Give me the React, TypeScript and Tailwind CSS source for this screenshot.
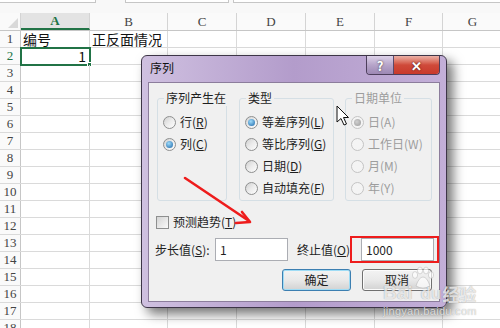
import React from 'react';

const cols = [
  { l: 'A', w: 69 },
  { l: 'B', w: 78 },
  { l: 'C', w: 69 },
  { l: 'D', w: 69 },
  { l: 'E', w: 69 },
  { l: 'F', w: 68 },
  { l: 'G', w: 60 },
];

const rows = Array.from({ length: 18 }, (_, i) => i + 1);

const Radio: React.FC<{ checked?: boolean; disabled?: boolean }> = ({ checked, disabled }) => (
  <span
    className={`flex h-[13px] w-[13px] shrink-0 items-center justify-center rounded-full border ${
      disabled
        ? 'border-[#c4c4c4] bg-[#f4f4f4]'
        : 'border-[#8e8f8f] bg-gradient-to-br from-[#d0d0d0] via-[#ececec] to-[#fdfdfd]'
    }`}
  >
    {checked && (
      <span
        className={`h-[7px] w-[7px] rounded-full ${
          disabled
            ? 'bg-[radial-gradient(circle_at_40%_40%,#d0d0d0,#9a9a9a)]'
            : 'bg-[radial-gradient(circle_at_40%_35%,#9fdcfb,#1a64a6)]'
        }`}
      />
    )}
  </span>
);

const Option: React.FC<{ label: string; k: string; checked?: boolean; disabled?: boolean; under?: boolean }> = ({
  label,
  k,
  checked,
  disabled,
  under = true,
}) => (
  <div className={`flex h-[22px] items-center gap-[4px] whitespace-nowrap ${disabled ? 'text-[#9d9d9d]' : 'text-[#1e1e1e]'}`}>
    <Radio checked={checked} disabled={disabled} />
    <span>
      {label}({under ? <u>{k}</u> : k})
    </span>
  </div>
);

const Group: React.FC<{ title: string; className: string; children: React.ReactNode; disabled?: boolean }> = ({
  title,
  className,
  children,
  disabled,
}) => (
  <fieldset className={`h-[111px] min-w-0 rounded-[3px] border border-[#d5dfe5] pl-[5px] pt-[5px] ${className}`}>
    <legend
      className={`ml-[1px] whitespace-nowrap px-[2px] leading-[16px] ${disabled ? 'text-[#9d9d9d]' : 'text-[#1e1e1e]'}`}
    >
      {title}
    </legend>
    {children}
  </fieldset>
);

const Button: React.FC<{ children: React.ReactNode; primary?: boolean; className?: string }> = ({ children, primary, className }) => (
  <div
    className={`flex h-[22px] items-center justify-center rounded-[3px] border bg-gradient-to-b from-[#f3f3f3] via-[#e9e9e9] to-[#d2d2d2] text-[#1e1e1e] ${
      primary ? 'border-[#3c7fb1] shadow-[inset_0_0_0_1px_#9fdcf5]' : 'border-[#707070] shadow-[inset_0_0_0_1px_#fbfbfb]'
    } ${className ?? ''}`}
  >
    {children}
  </div>
);

const Dialog: React.FC = () => (
  <div className="absolute left-[141px] top-[55px] flex h-[253px] w-[306px] flex-col rounded-[6px] border border-[#3d3547] bg-gradient-to-r from-[#cfc0e0] via-[#b39ccb] to-[#c3afd8] shadow-[6px_6px_12px_rgba(0,0,0,0.55)] font-['Noto_Sans_CJK_SC',sans-serif] text-[12px]">
    <div className="flex h-[26px] shrink-0 items-start justify-between">
      <span className="ml-[8px] mt-[4px] text-[12px] leading-[16px] text-[#111]">序列</span>
      <div className="mr-[6px] flex overflow-hidden rounded-b-[4px] border border-t-0 border-[#4d3f5c]">
        <div className="flex h-[18px] w-[27px] items-center justify-center border-r border-[#5b4a6b] bg-gradient-to-b from-[#ddd2e8] via-[#b6a4c9] to-[#9d88b4] text-[13px] font-bold leading-none text-white [text-shadow:0_0_2px_#333]">
          ?
        </div>
        <div className="flex h-[18px] w-[45px] items-center justify-center bg-gradient-to-b from-[#eab0a6] via-[#cf4a3a] to-[#c8392b] text-[13px] font-bold leading-none text-white [text-shadow:0_0_2px_#3a0d08]">
          ✕
        </div>
      </div>
    </div>
    <div className="mx-[6px] mb-[5px] flex flex-1 flex-col border border-[#8c7d9c] bg-[#f0f0f0]">
      <div className="ml-[8px] mt-[7px] flex">
        <Group title="序列产生在" className="w-[70px]">
          <Option label="行" k="R" />
          <Option label="列" k="C" checked />
        </Group>
        <Group title="类型" className="ml-[12px] w-[95px]">
          <Option label="等差序列" k="L" checked />
          <Option label="等比序列" k="G" />
          <Option label="日期" k="D" />
          <Option label="自动填充" k="F" />
        </Group>
        <Group title="日期单位" className="ml-[11px] w-[87px]" disabled>
          <Option label="日" k="A" checked disabled under={false} />
          <Option label="工作日" k="W" disabled under={false} />
          <Option label="月" k="M" disabled under={false} />
          <Option label="年" k="Y" disabled under={false} />
        </Group>
      </div>
      <div className="ml-[7px] mt-[13px] flex h-[16px] items-center gap-[4px] text-[#1e1e1e]">
        <span className="h-[13px] w-[13px] border border-[#8e8f8f] bg-gradient-to-br from-[#d4d4d4] to-[#fafafa]" />
        <span>
          预测趋势(<u>T</u>)
        </span>
      </div>
      <div className="ml-[6px] mt-[8px] flex items-center text-[#1e1e1e]">
        <span className="w-[60px]">
          步长值(<u>S</u>):
        </span>
        <div className="flex h-[23px] w-[73px] items-center border border-[#abadb3] bg-white pl-[4px]">1</div>
        <span className="ml-[9px] w-[64px]">
          终止值(<u>O</u>)
        </span>
        <div className="relative flex h-[23px] w-[73px] items-center border border-[#abadb3] bg-white pl-[4px]">
          1000
          <div className="absolute -left-[12px] -top-[3px] h-[27px] w-[89px] border-2 border-[#ee1c1c]" />
        </div>
      </div>
      <div className="mr-[7px] mt-[8px] flex justify-end gap-[11px]">
        <Button primary className="w-[69px]">
          确定
        </Button>
        <Button className="w-[70px]">取消</Button>
      </div>
    </div>
  </div>
);

export default function App() {
  return (
    <div className="relative h-[328px] w-[500px] overflow-hidden bg-white font-['Noto_Sans_CJK_SC',sans-serif]">
      {/* formula bar remnant */}
      <div className="flex h-[13px] items-start bg-[#f8f8f8]">
        <div className="h-[3px] w-[96px] border-b border-r border-[#c6c6c6] bg-white" />
        <div className="ml-[29px] h-[3px] w-[104px] border-x border-b border-[#c6c6c6] bg-white" />
        <div className="ml-[4px] h-[3px] flex-1 border-b border-l border-[#c6c6c6] bg-white" />
      </div>
      {/* column headers */}
      <div className="flex h-[18px] border-b border-[#c6c6c6] bg-[#fafafa] font-['Liberation_Serif',serif] text-[13px] text-[#444]">
        <div className="relative w-[21px] shrink-0 border-r border-[#d4d4d4]">
          <svg className="absolute bottom-[2px] right-[2px]" width="10" height="10" viewBox="0 0 10 10">
            <path d="M10 0 L10 10 L0 10 Z" fill="#d9d9d9" />
          </svg>
        </div>
        {cols.map((c) => (
          <div
            key={c.l}
            style={{ width: c.w }}
            className={`flex shrink-0 items-center justify-center border-r border-[#d4d4d4] ${
              c.l === 'A' ? 'border-b-2 border-b-[#217346] bg-[#e3e3e3] font-bold text-[#217346]' : ''
            }`}
          >
            {c.l}
          </div>
        ))}
      </div>
      {/* rows */}
      {rows.map((r) => (
        <div key={r} className="flex h-[17px] border-b border-[#dadada]">
          <div
            className={`flex w-[21px] shrink-0 items-center justify-center border-r border-[#c6c6c6] bg-[#fafafa] font-['Liberation_Serif',serif] text-[13px] ${
              r === 2 ? 'bg-[#e3e3e3] text-[#217346]' : 'text-[#444]'
            }`}
          >
            {r}
          </div>
          {cols.map((c) => (
            <div
              key={c.l}
              style={{ width: c.w }}
              className="relative flex shrink-0 items-center overflow-visible whitespace-nowrap border-r border-[#dadada] px-[2px] text-[14px] leading-[17px] text-[#111]"
            >
              {r === 1 && c.l === 'A' && '编号'}
              {r === 1 && c.l === 'B' && '正反面情况'}
              {r === 2 && c.l === 'A' && (
                <>
                  <span className="ml-auto pr-[1px]">1</span>
                  <div className="absolute -left-[1px] -top-[1px] h-[19px] w-[71px] border-2 border-[#217346]" />
                  <div className="absolute -bottom-[3px] -right-[3px] h-[5px] w-[5px] border border-white bg-[#217346]" />
                </>
              )}
            </div>
          ))}
        </div>
      ))}

      <Dialog />

      {/* red annotation arrow */}
      <svg className="pointer-events-none absolute left-0 top-0" width="500" height="328">
        <path d="M185 178 L249 221" stroke="#ee1c1c" strokeWidth="2.6" strokeLinecap="round" />
        <path d="M242 212 L250 222 L236 223" stroke="#ee1c1c" strokeWidth="2.6" fill="none" strokeLinecap="round" strokeLinejoin="round" />
        {/* mouse pointer */}
        <path
          d="M337 106 L337 122 L341 118.5 L344 125 L346.5 124 L343.5 117.5 L348.5 117.5 Z"
          fill="#fff"
          stroke="#111"
          strokeWidth="1"
          strokeLinejoin="round"
        />
        {/* baidu paw */}
        <g fill="#fff" fillOpacity="0.7" stroke="#9a9a9a" strokeOpacity="0.45" strokeWidth="0.8">
          <ellipse cx="415" cy="275" rx="2.6" ry="3.4" />
          <ellipse cx="420" cy="270.5" rx="2.6" ry="3.4" />
          <ellipse cx="426" cy="270.5" rx="2.6" ry="3.4" />
          <ellipse cx="431" cy="275" rx="2.6" ry="3.4" />
          <path d="M416 286 Q419 277 423 277 Q427 277 430 286 Q423 290 416 286 Z" />
        </g>
      </svg>
      <div className="pointer-events-none absolute left-[383px] top-[283px] flex flex-col font-['Liberation_Sans',sans-serif] text-white/75 [text-shadow:0_0_1px_rgba(0,0,0,0.4)]">
        <div className="flex items-end leading-none">
          <span className="text-[19px] font-bold">Bai</span>
          <span className="ml-[8px] text-[17px] font-bold">du</span>
          <span className="ml-[1px] font-['Noto_Sans_CJK_SC',sans-serif] text-[17px] font-bold">经验</span>
        </div>
        <span className="mt-[4px] text-[11px] leading-none tracking-[0.3px]">jingyan.baidu.com</span>
      </div>
    </div>
  );
}
